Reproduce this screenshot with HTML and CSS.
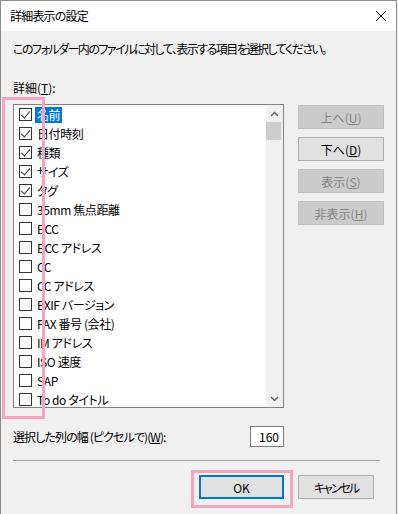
FILE: index.html
```html
<!DOCTYPE html>
<html lang="ja">
<head>
    <meta charset="UTF-8">
    <title>詳細表示の設定</title>
    <link rel="stylesheet" href="styles.css">
</head>
<body>
    <div class="window">
        <div class="titlebar">
            <span class="title">詳細表示の設定</span>
            <svg class="close" width="12" height="12" viewBox="0 0 12 12">
                <path d="M1 1 L11 11 M11 1 L1 11" stroke="#000" stroke-width="1" fill="none"/>
            </svg>
        </div>

        <div class="content">
            <p class="desc">このフォルダー内のファイルに対して、表示する項目を選択してください。</p>
            <div class="label">詳細(<u>T</u>):</div>

            <div class="main">
                <div class="listbox">
                    <div class="items">
                        <div class="row"><span class="check on"></span><span class="text selected">名前</span></div>
                        <div class="row"><span class="check on"></span><span class="text">日付時刻</span></div>
                        <div class="row"><span class="check on"></span><span class="text">種類</span></div>
                        <div class="row"><span class="check on"></span><span class="text">サイズ</span></div>
                        <div class="row"><span class="check on"></span><span class="text">タグ</span></div>
                        <div class="row"><span class="check"></span><span class="text">35mm 焦点距離</span></div>
                        <div class="row"><span class="check"></span><span class="text">BCC</span></div>
                        <div class="row"><span class="check"></span><span class="text">BCC アドレス</span></div>
                        <div class="row"><span class="check"></span><span class="text">CC</span></div>
                        <div class="row"><span class="check"></span><span class="text">CC アドレス</span></div>
                        <div class="row"><span class="check"></span><span class="text">EXIF バージョン</span></div>
                        <div class="row"><span class="check"></span><span class="text">FAX 番号 (会社)</span></div>
                        <div class="row"><span class="check"></span><span class="text">IM アドレス</span></div>
                        <div class="row"><span class="check"></span><span class="text">ISO 速度</span></div>
                        <div class="row"><span class="check"></span><span class="text">SAP</span></div>
                        <div class="row"><span class="check"></span><span class="text">To do タイトル</span></div>
                    </div>
                    <div class="scrollbar">
                        <div class="arrow">
                            <svg width="9" height="6" viewBox="0 0 9 6"><path d="M1 5 L4.5 1.5 L8 5" stroke="#606060" stroke-width="1.5" fill="none"/></svg>
                        </div>
                        <div class="thumb"></div>
                        <div class="track"></div>
                        <div class="arrow">
                            <svg width="9" height="6" viewBox="0 0 9 6"><path d="M1 1 L4.5 4.5 L8 1" stroke="#606060" stroke-width="1.5" fill="none"/></svg>
                        </div>
                    </div>
                </div>

                <div class="side-buttons">
                    <button class="btn" disabled>上へ(<u>U</u>)</button>
                    <button class="btn">下へ(<u>D</u>)</button>
                    <button class="btn" disabled>表示(<u>S</u>)</button>
                    <button class="btn" disabled>非表示(<u>H</u>)</button>
                </div>
            </div>

            <div class="width-row">
                <span class="width-label">選択した列の幅 (ピクセルで)(<u>W</u>):</span>
                <div class="num-input">160</div>
            </div>

            <div class="separator"></div>

            <div class="footer">
                <button class="btn ok">OK</button>
                <button class="btn cancel">キャンセル</button>
            </div>
        </div>

        <!-- pink annotation marks -->
        <div class="mark mark-list"></div>
        <div class="mark mark-ok"></div>
    </div>
</body>
</html>
```

FILE: styles.css
```css
* { box-sizing: border-box; }
body {
    margin: 0;
    background: #f0f0f0;
    font-family: "Noto Sans CJK JP", sans-serif;
    font-feature-settings: "palt";
    font-size: 12px;
    color: #000;
}
.window {
    position: relative;
    width: 397px;
    height: 514px;
    border: 1px solid #8c8c8c;
    border-bottom: none;
    background: #f0f0f0;
}
.titlebar {
    height: 30px;
    background: #fff;
    display: flex;
    align-items: center;
    justify-content: space-between;
    padding: 0 9px 0 9px;
}
.title {
    line-height: 16px;
    letter-spacing: -0.8px;
}
.close { display: block; }

.content {
    padding: 10px 12px 0 12px;
}
.desc {
    margin: 0;
    line-height: 16px;
    letter-spacing: -1.5px;
}
.label {
    margin-top: 23px;
    line-height: 16px;
}
.main {
    display: flex;
    gap: 14px;
    margin-top: 8px;
}
.listbox {
    width: 271px;
    height: 304px;
    border: 1px solid #828282;
    background: #fff;
    display: flex;
    overflow: hidden;
}
.items {
    flex: 1;
    overflow: hidden;
}
.row {
    height: 19px;
    display: flex;
    align-items: center;
    padding-left: 5px;
}
.check {
    width: 13px;
    height: 13px;
    border: 1px solid #333;
    background: #fff;
    margin-right: 3px;
    flex-shrink: 0;
    position: relative;
}
.check.on::after {
    content: "";
    position: absolute;
    left: 3px;
    top: 0px;
    width: 4px;
    height: 8px;
    border-right: 1.3px solid #333;
    border-bottom: 1.3px solid #333;
    transform: rotate(40deg);
}
.text {
    padding: 0 2px;
    line-height: 16px;
    white-space: nowrap;
    letter-spacing: -0.4px;
}
.text.selected {
    background: #0078d7;
    color: #fff;
}
.scrollbar {
    width: 17px;
    background: #f0f0f0;
    display: flex;
    flex-direction: column;
}
.arrow {
    height: 17px;
    display: flex;
    align-items: center;
    justify-content: center;
}
.thumb {
    height: 18px;
    margin-right: 2px;
    background: #cdcdcd;
}
.track { flex: 1; }

.side-buttons {
    display: flex;
    flex-direction: column;
    gap: 8px;
    margin-top: 1px;
}
.btn {
    font-family: inherit;
    font-feature-settings: "palt";
    font-size: 12px;
    width: 86px;
    height: 24px;
    padding: 0;
    background: #e1e1e1;
    border: 1px solid #adadad;
    color: #000;
}
.btn:disabled {
    background: #cccccc;
    border-color: #bfbfbf;
    color: #838383;
}
.width-row {
    width: 271px;
    margin-top: 18px;
    display: flex;
    justify-content: space-between;
    align-items: center;
}
.width-label { letter-spacing: -0.9px; }
.num-input {
    width: 34px;
    height: 21px;
    border: 1px solid #7a7a7a;
    background: #fff;
    text-align: right;
    padding-right: 4px;
    line-height: 19px;
}
.separator {
    width: 367px;
    height: 1px;
    background: #a0a0a0;
    margin-top: 13px;
}
.footer {
    display: flex;
    justify-content: flex-end;
    gap: 14px;
    margin-top: 14px;
    margin-right: 10px;
}
.ok {
    width: 85px;
    border: 2px solid #0078d7;
}
.cancel {
    width: 76px;
    letter-spacing: -2px;
}

.mark {
    position: absolute;
    border: 3px solid #f3a5c3;
}
.mark-list {
    left: 1px;
    top: 96px;
    width: 43px;
    height: 322px;
}
.mark-ok {
    left: 190px;
    top: 469px;
    width: 102px;
    height: 38px;
}
```
